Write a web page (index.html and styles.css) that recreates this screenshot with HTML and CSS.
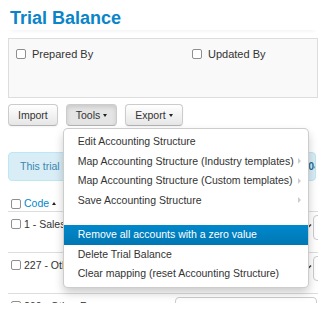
FILE: index.html
```html
<!DOCTYPE html>
<html lang="en">
<head>
    <meta charset="UTF-8">
    <meta name="viewport" content="width=device-width, initial-scale=1.0">
    <title>Trial Balance</title>
    <link rel="stylesheet" href="styles.css">
</head>
<body>
    <div class="page">
        <div class="title-bar">
            <h1>Trial Balance</h1>
        </div>

        <!-- Sign-off panel -->
        <div class="well">
            <label class="check"><input type="checkbox" class="cb"> Prepared By</label>
            <label class="check"><input type="checkbox" class="cb"> Updated By</label>
        </div>

        <!-- Toolbar -->
        <div class="toolbar">
            <button class="btn">Import</button>
            <div class="btn-group">
                <button class="btn active">Tools <span class="caret"></span></button>
                <ul class="dropdown-menu">
                    <li><a>Edit Accounting Structure</a></li>
                    <li><a>Map Accounting Structure (Industry templates) <span class="sub-arrow"></span></a></li>
                    <li><a>Map Accounting Structure (Custom templates) <span class="sub-arrow"></span></a></li>
                    <li><a>Save Accounting Structure <span class="sub-arrow"></span></a></li>
                    <li class="divider"></li>
                    <li class="hover"><a>Remove all accounts with a zero value</a></li>
                    <li><a>Delete Trial Balance</a></li>
                    <li><a>Clear mapping (reset Accounting Structure)</a></li>
                </ul>
            </div>
            <div class="btn-group">
                <button class="btn">Export <span class="caret"></span></button>
            </div>
        </div>

        <div class="alert">This trial balance was imported from the accounting file on 15/<strong>04</strong>/2019</div>

        <!-- Accounts table -->
        <div class="thead">
            <input type="checkbox" class="cb">
            <a class="sort">Code</a>
            <span class="sort-up"></span>
        </div>
        <div class="row">
            <label class="name"><input type="checkbox" class="cb"> 1 - Sales Type A</label>
            <div class="field">
                <input type="text" class="input">
                <svg class="pencil" width="10" height="10" viewBox="0 0 10 10"><path d="M2 8.5 L9 1.5" stroke="#3a3a3a" stroke-width="1.6" fill="none"/></svg>
                <span class="select"></span>
            </div>
        </div>
        <div class="row">
            <label class="name"><input type="checkbox" class="cb"> 227 - Other Income</label>
            <div class="field">
                <input type="text" class="input">
                <svg class="pencil" width="10" height="10" viewBox="0 0 10 10"><path d="M2 8.5 L9 1.5" stroke="#3a3a3a" stroke-width="1.6" fill="none"/></svg>
                <span class="select"></span>
            </div>
        </div>
        <div class="row">
            <label class="name"><input type="checkbox" class="cb"> 260 - Other Revenue</label>
            <div class="field">
                <input type="text" class="input wide">
            </div>
        </div>
    </div>
</body>
</html>
```

FILE: styles.css
```css
body {
    margin: 0;
    font-family: "Liberation Sans", Arial, sans-serif;
    font-size: 10.5px;
    color: #333;
    background: #fff;
}
.page {
    width: 310px;
    height: 303px;
    margin-left: 8px;
    overflow: hidden;
}
.title-bar {
    padding: 8px 2px 2px;
    margin-bottom: 8px;
    box-shadow: 0 4px 4px -3px rgba(0, 0, 0, 0.06);
}
h1 {
    margin: 0;
    font-size: 18px;
    line-height: 20px;
    color: #0b84c9;
}
.cb {
    appearance: none;
    -webkit-appearance: none;
    width: 10px;
    height: 10px;
    margin: 0;
    border: 1px solid #8f8f8f;
    border-radius: 2px;
    background: #fff;
    flex-shrink: 0;
}
.well {
    height: 60px;
    box-sizing: border-box;
    border: 1px solid #ddd;
    background: #f9f9f9;
    display: grid;
    grid-template-columns: 176px 1fr;
    align-items: start;
    padding: 9px 7px 0;
}
.check {
    display: flex;
    align-items: center;
    gap: 6px;
    line-height: 12px;
    font-size: 11px;
}
.toolbar {
    display: flex;
    gap: 8px;
    margin-top: 6px;
}
.btn {
    height: 22px;
    padding: 0 9px;
    font: inherit;
    color: #333;
    background: linear-gradient(#fff, #e6e6e6);
    border: 1px solid #ccc;
    border-bottom-color: #b3b3b3;
    border-radius: 4px;
    box-shadow: 0 1px 2px rgba(0, 0, 0, 0.05);
    display: flex;
    align-items: center;
    gap: 3px;
}
.btn.active {
    background: #e4e4e4;
    box-shadow: inset 0 2px 4px rgba(0, 0, 0, 0.12);
}
.caret {
    width: 0;
    height: 0;
    border-top: 3px solid #222;
    border-left: 2.5px solid transparent;
    border-right: 2.5px solid transparent;
}
.btn-group {
    position: relative;
}
.dropdown-menu {
    position: absolute;
    top: 100%;
    left: -3px;
    z-index: 10;
    width: 246px;
    box-sizing: border-box;
    margin: 2px 0 0;
    padding: 3px 0;
    list-style: none;
    background: #fff;
    border: 1px solid rgba(0, 0, 0, 0.2);
    border-radius: 5px;
    box-shadow: 0 5px 10px rgba(0, 0, 0, 0.2);
}
.dropdown-menu a {
    display: flex;
    justify-content: space-between;
    align-items: center;
    padding: 0 7px 0 14px;
    line-height: 19.5px;
    white-space: nowrap;
    color: #333;
}
.dropdown-menu .hover a {
    color: #fff;
    background: linear-gradient(#0088cc, #0077b3);
}
.dropdown-menu .divider {
    height: 15px;
}
.sub-arrow {
    width: 0;
    height: 0;
    border-left: 3px solid #ccc;
    border-top: 3px solid transparent;
    border-bottom: 3px solid transparent;
}
.alert {
    margin: 26px 2px 0 0;
    height: 29px;
    box-sizing: border-box;
    padding: 0 11px;
    line-height: 27px;
    color: #3a87ad;
    background: #d9edf7;
    border: 1px solid #bce8f1;
    border-radius: 4px;
    white-space: nowrap;
    overflow: hidden;
}
.alert strong {
    color: #2c6c91;
}
.thead {
    margin-top: 14px;
    padding: 2px 3px 1px;
    line-height: 13px;
    display: flex;
    align-items: center;
    gap: 3px;
    border-bottom: 1px solid #ddd;
}
.sort {
    color: #0088cc;
}
.sort-up {
    width: 0;
    height: 0;
    border-bottom: 3px solid #222;
    border-left: 2.5px solid transparent;
    border-right: 2.5px solid transparent;
}
.row {
    display: flex;
    height: 41px;
    box-sizing: border-box;
    padding-left: 3px;
    border-bottom: 1px solid #ddd;
    overflow: hidden;
}
.name {
    flex: 0 0 164px;
    display: flex;
    align-items: center;
    gap: 3px;
    height: 12px;
    margin-top: 6px;
    white-space: nowrap;
    overflow: hidden;
}
.field {
    display: flex;
    align-items: flex-start;
    padding-top: 3px;
}
.input {
    flex-shrink: 0;
    width: 125px;
    height: 25px;
    box-sizing: border-box;
    margin: 0;
    border: 1px solid #ccc;
    border-radius: 4px;
    background: #fff;
}
.input.wide {
    width: 142px;
}
.pencil {
    flex-shrink: 0;
    margin: 8px 0 0 2px;
}
.select {
    flex-shrink: 0;
    width: 40px;
    height: 25px;
    box-sizing: border-box;
    margin-left: 1px;
    border: 1px solid #ccc;
    border-radius: 4px;
}
```
